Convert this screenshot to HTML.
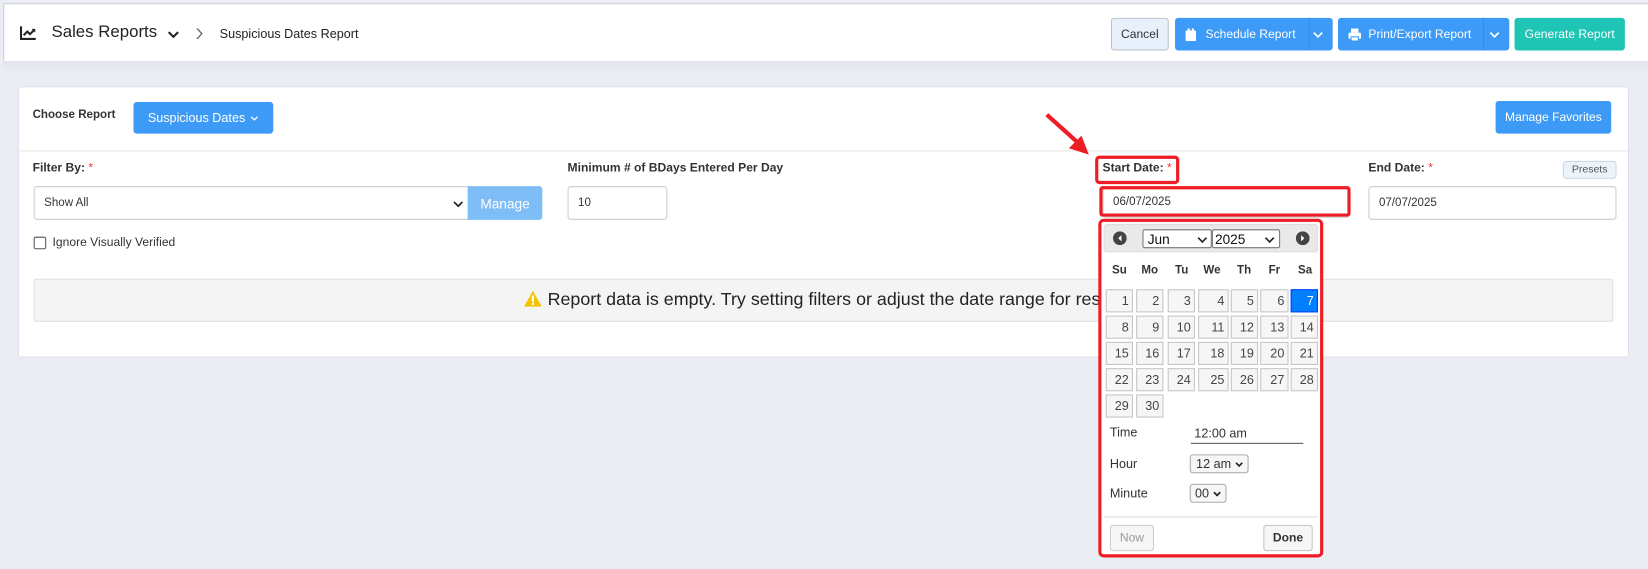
<!DOCTYPE html>
<html><head><meta charset="utf-8"><style>
html,body{margin:0;padding:0;width:1648px;height:569px;overflow:hidden;background:#fff}
#w{position:absolute;left:0;top:0;width:1568px;height:541px;transform:scale(1.05102,1.0518);transform-origin:0 0;font-family:"Liberation Sans",Arial,sans-serif;color:#333;background:#ebedf5}
.a{position:absolute;box-sizing:border-box}
.btn{position:absolute;box-sizing:border-box;border-radius:3px;color:#fff;font-size:11.5px;display:flex;align-items:center;justify-content:center}
.lbl{position:absolute;font-size:11.5px;font-weight:bold;color:#333}
.req{color:#e33;font-weight:normal}
.inp{position:absolute;box-sizing:border-box;border:1px solid #ccc;border-radius:3px;background:#fff;font-size:11px;color:#333;padding-left:9px;display:flex;align-items:center}
.c{position:absolute;box-sizing:border-box;width:26px;height:22px;border:1px solid #c5c5c5;background:#f6f6f6;font-size:12px;color:#454545;text-align:right;padding-right:3px;line-height:20px}
.dn{position:absolute;font-size:11px;font-weight:bold;color:#333;top:251px}
</style></head><body><div id="w">
<div class="a" style="left:3px;top:3px;width:1565px;height:55px;background:#fff;border-top:1px solid #ccc;border-left:1px solid #ccc"></div>
<div class="a" style="left:3px;top:58px;width:1565px;height:12px;background:linear-gradient(#e3e4ee,#ebedf5)"></div>
<svg class="a" style="left:19px;top:25px" width="16" height="13" viewBox="0 0 16 13"><path d="M1 0V12H15" stroke="#222" stroke-width="2" fill="none"/><path d="M3.5 8.5L7 5L9.5 7.5L13.5 3.5" stroke="#222" stroke-width="2" fill="none"/><path d="M11 2.5H14.5V6" fill="#222"/></svg>
<div class="a" style="left:49px;top:22px;font-size:16px;color:#222">Sales Reports</div>
<svg class="a" style="left:159px;top:29px" width="12" height="8"><path d="M1.5 1.5L6 6L10.5 1.5" stroke="#222" stroke-width="2" fill="none"/></svg>
<svg class="a" style="left:186px;top:26px" width="8" height="12"><path d="M1.5 1L6 6L1.5 11" stroke="#666" stroke-width="1.3" fill="none"/></svg>
<div class="a" style="left:209px;top:25px;font-size:12px;color:#222">Suspicious Dates Report</div>
<div class="btn" style="left:1057px;top:17px;width:55px;height:31px;background:#e8f1fb;border:1px solid #bcc4cc;color:#333">Cancel</div>
<div class="btn" style="left:1118px;top:17px;width:150px;height:31px;background:#3d9bf7;justify-content:flex-start;padding-left:10px"><svg width="10" height="12" style="margin-right:9px"><rect x="0" y="2" width="10" height="10" rx="1" fill="#fff"/><rect x="2" y="0" width="2" height="3" fill="#fff"/><rect x="6" y="0" width="2" height="3" fill="#fff"/></svg>Schedule Report<svg width="10" height="6" style="position:absolute;left:131px;top:13px"><path d="M1 1L5 5L9 1" stroke="#fff" stroke-width="1.6" fill="none"/></svg><div class="a" style="left:127px;top:0;width:1px;height:31px;background:#3a8de0"></div></div>
<div class="btn" style="left:1273px;top:17px;width:163px;height:31px;background:#3d9bf7;justify-content:flex-start;padding-left:10px"><svg width="12" height="12" style="margin-right:7px"><rect x="2.5" y="0" width="7" height="4" fill="#fff"/><rect x="0" y="4" width="12" height="6" rx="1.5" fill="#fff"/><rect x="2.5" y="8" width="7" height="4" fill="#fff" stroke="#3d9bf7"/></svg>Print/Export Report<svg width="10" height="6" style="position:absolute;left:144px;top:13px"><path d="M1 1L5 5L9 1" stroke="#fff" stroke-width="1.6" fill="none"/></svg><div class="a" style="left:138px;top:0;width:1px;height:31px;background:#3a8de0"></div></div>
<div class="btn" style="left:1441px;top:17px;width:105px;height:31px;background:#1ec4b4">Generate Report</div>
<div class="a" style="left:17px;top:82px;width:1533px;height:258px;background:#fff;border:1px solid #e0e0e8;border-radius:3px"></div>
<div class="lbl" style="left:31px;top:103px;font-size:11px">Choose Report</div>
<div class="btn" style="left:127px;top:97px;width:133px;height:30px;background:#3d9bf7;font-size:12px">Suspicious Dates <svg width="8" height="5" style="margin-left:5px"><path d="M1 1L4 4L7 1" stroke="#fff" stroke-width="1.2" fill="none"/></svg></div>
<div class="btn" style="left:1423px;top:96px;width:110px;height:31px;background:#3d9bf7">Manage Favorites</div>
<div class="a" style="left:18px;top:143px;width:1531px;height:1px;background:#e6e6e6"></div>
<div class="lbl" style="left:31px;top:154px">Filter By: <span class="req">*</span></div>
<div class="lbl" style="left:540px;top:154px">Minimum # of BDays Entered Per Day</div>
<div class="lbl" style="left:1049px;top:154px">Start Date: <span class="req">*</span></div>
<div class="lbl" style="left:1302px;top:154px">End Date: <span class="req">*</span></div>
<div class="btn" style="left:1487px;top:153px;width:51px;height:17px;background:#edf3fa;border:1px solid #d0d6dd;color:#555;font-size:10px">Presets</div>
<div class="inp" style="left:32px;top:177px;width:414px;height:32px;border-radius:3px 0 0 3px">Show All<svg width="10" height="6" style="position:absolute;right:4px;top:13px"><path d="M1 1L5 5L9 1" stroke="#222" stroke-width="1.6" fill="none"/></svg></div>
<div class="btn" style="left:445px;top:177px;width:71px;height:32px;background:#7fbdf7;border-radius:0 3px 3px 0;font-size:13px">Manage</div>
<div class="inp" style="left:540px;top:177px;width:95px;height:32px">10</div>
<div class="inp" style="left:1049px;top:177px;width:235px;height:30px">06/07/2025</div>
<div class="inp" style="left:1302px;top:177px;width:236px;height:32px">07/07/2025</div>
<div class="a" style="left:32px;top:225px;width:12px;height:12px;border:1px solid #555;border-radius:2px;background:#fff"></div>
<div class="a" style="left:50px;top:225px;font-size:11.5px;color:#333">Ignore Visually Verified</div>
<div class="a" style="left:32px;top:265px;width:1503px;height:41px;background:#f4f4f4;border:1px solid #e0e0e0;border-radius:2px"></div>
<svg class="a" style="left:498px;top:276px" width="18" height="16"><path d="M9 0.5L17.5 15.5H0.5Z" fill="#f5c400"/><rect x="8" y="5" width="2" height="6" fill="#fff"/><rect x="8" y="12" width="2" height="2" fill="#fff"/></svg>
<div class="a" style="left:521px;top:275px;font-size:17px;color:#222;white-space:nowrap">Report data is empty. Try setting filters or adjust the date range for results.</div>
<div class="a" style="left:1042px;top:148px;width:80px;height:27px;border:3px solid #ee1c24;border-radius:4px"></div>
<div class="a" style="left:1046px;top:177px;width:239px;height:29px;border:3px solid #ee1c24;border-radius:3px"></div>
<svg class="a" style="left:990px;top:105px" width="52" height="48"><path d="M6 4L36 31" stroke="#ee1c24" stroke-width="4"/><path d="M46 42L27 36L39 24Z" fill="#ee1c24"/></svg>
<div class="a" style="left:1045px;top:208px;width:214px;height:322px;background:#fff;border:3px solid #ee1c24;border-radius:5px"></div>
<div class="a" style="left:1050px;top:213px;width:204px;height:27px;background:#e9e9e9;border:1px solid #ddd;border-radius:3px"></div>
<svg class="a" style="left:1059px;top:220px" width="13" height="13"><circle cx="6.5" cy="6.5" r="6.5" fill="#444"/><path d="M8 3.5L5 6.5L8 9.5Z" fill="#fff"/></svg>
<svg class="a" style="left:1233px;top:220px" width="13" height="13"><circle cx="6.5" cy="6.5" r="6.5" fill="#444"/><path d="M5 3.5L8 6.5L5 9.5Z" fill="#fff"/></svg>
<div class="inp" style="left:1087px;top:218px;width:66px;height:18px;border-color:#767676;border-radius:2px;font-size:13px;padding-left:4px;color:#111">Jun<svg width="10" height="6" style="position:absolute;right:3px;top:6px"><path d="M1 1L5 5L9 1" stroke="#222" stroke-width="1.6" fill="none"/></svg></div>
<div class="inp" style="left:1153px;top:218px;width:65px;height:18px;border-color:#767676;border-radius:2px;font-size:13px;padding-left:2px;color:#111">2025<svg width="10" height="6" style="position:absolute;right:4px;top:6px"><path d="M1 1L5 5L9 1" stroke="#222" stroke-width="1.6" fill="none"/></svg></div>
<div class="dn" style="left:1058px">Su</div><div class="dn" style="left:1086px">Mo</div><div class="dn" style="left:1118px">Tu</div><div class="dn" style="left:1145px">We</div><div class="dn" style="left:1177px">Th</div><div class="dn" style="left:1207px">Fr</div><div class="dn" style="left:1235px">Sa</div>
<div class="a" style="left:1056px;top:404px;font-size:12px">Time</div>
<div class="a" style="left:1133px;top:405px;font-size:12px;width:107px;height:17px;border-bottom:1px solid #555">&nbsp;12:00 am</div>
<div class="a" style="left:1056px;top:434px;font-size:12px">Hour</div>
<div class="inp" style="left:1132px;top:432px;width:56px;height:18px;padding-left:5px;font-size:12px;background:#f6f6f6;border-color:#aaa">12 am<svg width="8" height="5" style="position:absolute;right:4px;top:6px"><path d="M1 1L4 4L7 1" stroke="#222" stroke-width="1.6" fill="none"/></svg></div>
<div class="a" style="left:1056px;top:462px;font-size:12px">Minute</div>
<div class="inp" style="left:1132px;top:460px;width:35px;height:18px;padding-left:4px;font-size:12px;background:#f6f6f6;border-color:#aaa">00<svg width="8" height="5" style="position:absolute;right:4px;top:6px"><path d="M1 1L4 4L7 1" stroke="#222" stroke-width="1.6" fill="none"/></svg></div>
<div class="a" style="left:1050px;top:491px;width:204px;height:1px;background:#ddd"></div>
<div class="btn" style="left:1056px;top:499px;width:42px;height:25px;background:#f6f6f6;border:1px solid #ccc;color:#999">Now</div>
<div class="btn" style="left:1202px;top:499px;width:47px;height:25px;background:#f6f6f6;border:1px solid #c5c5c5;color:#333;font-weight:bold">Done</div>
<div class="c" style="left:1052px;top:275px">1</div><div class="c" style="left:1081px;top:275px">2</div><div class="c" style="left:1111px;top:275px">3</div><div class="c" style="left:1140px;top:275px;width:29px">4</div><div class="c" style="left:1171px;top:275px">5</div><div class="c" style="left:1199px;top:275px;width:27px">6</div><div class="c" style="left:1228px;top:275px;background:#007fff;border-color:#003eff;color:#fff">7</div>
<div class="c" style="left:1052px;top:300px">8</div><div class="c" style="left:1081px;top:300px">9</div><div class="c" style="left:1111px;top:300px">10</div><div class="c" style="left:1140px;top:300px;width:29px">11</div><div class="c" style="left:1171px;top:300px">12</div><div class="c" style="left:1199px;top:300px;width:27px">13</div><div class="c" style="left:1228px;top:300px">14</div>
<div class="c" style="left:1052px;top:325px">15</div><div class="c" style="left:1081px;top:325px">16</div><div class="c" style="left:1111px;top:325px">17</div><div class="c" style="left:1140px;top:325px;width:29px">18</div><div class="c" style="left:1171px;top:325px">19</div><div class="c" style="left:1199px;top:325px;width:27px">20</div><div class="c" style="left:1228px;top:325px">21</div>
<div class="c" style="left:1052px;top:350px">22</div><div class="c" style="left:1081px;top:350px">23</div><div class="c" style="left:1111px;top:350px">24</div><div class="c" style="left:1140px;top:350px;width:29px">25</div><div class="c" style="left:1171px;top:350px">26</div><div class="c" style="left:1199px;top:350px;width:27px">27</div><div class="c" style="left:1228px;top:350px">28</div>
<div class="c" style="left:1052px;top:375px">29</div><div class="c" style="left:1081px;top:375px">30</div>
</div></body></html>
